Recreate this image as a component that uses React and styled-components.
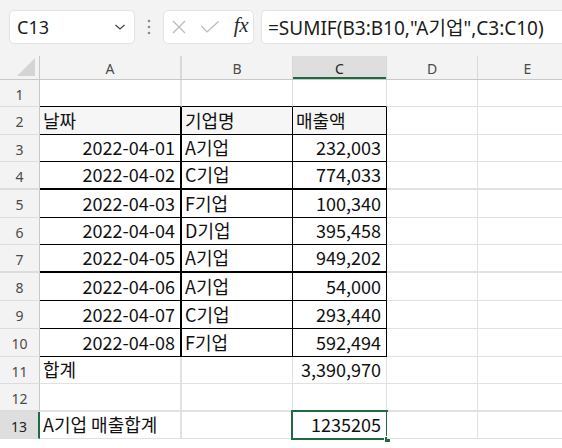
import React from "react";
import styled, { createGlobalStyle, css } from "styled-components";

const GlobalStyle = createGlobalStyle`
  html, body { margin: 0; padding: 0; background: #ffffff; }
  body { width: 562px; height: 448px; overflow: hidden; }
  * { box-sizing: border-box; }
`;

const GREEN = "#1f6b41";
const GRID = "#e1e1e1";
const INK = "#000000";

const Page = styled.div`
  width: 562px;
  height: 448px;
  overflow: hidden;
  background: #f3f3f3;
  display: flex;
  flex-direction: column;
`;

const Toolbar = styled.div`
  height: 56px;
  display: flex;
  align-items: flex-start;
  padding: 10px 0 0 9px;
`;

const Field = styled.div`
  height: 34px;
  background: #ffffff;
  border: 1px solid #e3e3e3;
  border-radius: 5px;
  display: flex;
  align-items: center;
`;

const NameBox = styled(Field)`
  width: 126px;
  padding: 0 8px 0 7px;
  justify-content: space-between;
  font-family: "Noto Sans", "Open Sans", sans-serif;
  font-size: 18px;
  color: #1b1b1b;
`;

const Grip = styled.div`
  width: 28px;
  height: 34px;
  display: flex;
  align-items: center;
  justify-content: center;
`;

const FxBox = styled(Field)`
  width: 91px;
  padding: 0 5px 0 7px;
  justify-content: space-between;
`;

const FxLabel = styled.span`
  font-family: "Liberation Serif", "DejaVu Serif", serif;
  font-style: italic;
  font-size: 21px;
  color: #2b2b2b;
  letter-spacing: -0.5px;
  margin-top: -3px;
`;

const FormulaBox = styled(Field)`
  flex: 1;
  margin-left: 7px;
  border-right: none;
  border-radius: 5px 0 0 5px;
  padding-left: 6px;
  font-family: "Noto Sans", "Noto Sans CJK KR", sans-serif;
  font-size: 19px;
  color: #1b1b1b;
  white-space: nowrap;
  overflow: hidden;
`;

const Sheet = styled.div`
  flex: 1;
  display: flex;
  flex-direction: column;
  background: #ffffff;
`;

const HeaderRow = styled.div`
  display: flex;
  height: 24px;
  background: #f3f3f3;
  border-bottom: 1px solid #c8c8c8;
  flex: none;
`;

const Corner = styled.div`
  width: 40px;
  flex: none;
  border-right: 1px solid #c8c8c8;
  display: flex;
  align-items: flex-end;
  justify-content: flex-end;
  padding: 0 4px 3px 0;
`;

const ColHead = styled.div`
  flex: none;
  width: ${(p) => p.$w}px;
  border-right: ${(p) => (p.$thick ? 2 : 1)}px solid #d8d8d8;
  display: flex;
  align-items: center;
  justify-content: center;
  font-family: "Noto Sans", "Open Sans", sans-serif;
  font-size: 14px;
  color: #4a4a4a;
  padding-top: 1px;
  ${(p) =>
    p.$active &&
    css`
      background: #dedede;
      color: #222;
      box-shadow: inset 0 -2px 0 ${GREEN};
    `}
`;

const Row = styled.div`
  display: flex;
  flex: none;
  height: ${(p) => p.$h}px;
`;

const RowHead = styled.div`
  width: 40px;
  flex: none;
  background: #f3f3f3;
  border-right: 1px solid #c8c8c8;
  border-bottom: ${(p) => (p.$thick ? 2 : 1)}px solid #dcdcdc;
  display: flex;
  align-items: center;
  justify-content: center;
  font-family: "Noto Sans", "Open Sans", sans-serif;
  font-size: 14px;
  color: #4a4a4a;
  padding-top: 2px;
  ${(p) =>
    p.$active &&
    css`
      background: #dedede;
      color: #222;
      border-right: 2px solid ${GREEN};
    `}
`;

const Cell = styled.div`
  position: relative;
  flex: none;
  width: ${(p) => p.$w}px;
  border-right: ${(p) => p.$rw}px solid ${(p) => p.$rc};
  border-bottom: ${(p) => p.$bw}px solid ${(p) => p.$bc};
  background: ${(p) => p.$bg || "#ffffff"};
  display: flex;
  align-items: flex-end;
  justify-content: ${(p) => (p.$right ? "flex-end" : "flex-start")};
  padding: 0 ${(p) => (p.$right ? 5 : 2)}px 5px ${(p) => (p.$right ? 2 : 3)}px;
  font-family: "Noto Sans CJK KR", "Noto Sans", sans-serif;
  font-size: 18px;
  line-height: 1;
  color: #111;
  white-space: nowrap;
`;

const Selection = styled.div`
  position: absolute;
  left: -2px;
  top: -2px;
  right: -2px;
  bottom: -2px;
  border: 2px solid ${GREEN};
  pointer-events: none;
`;

const Handle = styled.div`
  position: absolute;
  right: -5px;
  bottom: -5px;
  width: 7px;
  height: 7px;
  background: ${GREEN};
  border: 1px solid #ffffff;
`;

const colWidths = [142, 111, 94, 91, 100];
const colNames = ["A", "B", "C", "D", "E"];
const rowHeights = [27, 28, 27, 28, 28, 27, 28, 28, 28, 28, 27, 28, 27];
const thickRows = [4, 7, 12];

const data = {
  2: [["날짜"], ["기업명"], ["매출액"]],
  3: [["2022-04-01", 1], ["A기업"], ["232,003", 1]],
  4: [["2022-04-02", 1], ["C기업"], ["774,033", 1]],
  5: [["2022-04-03", 1], ["F기업"], ["100,340", 1]],
  6: [["2022-04-04", 1], ["D기업"], ["395,458", 1]],
  7: [["2022-04-05", 1], ["A기업"], ["949,202", 1]],
  8: [["2022-04-06", 1], ["A기업"], ["54,000", 1]],
  9: [["2022-04-07", 1], ["C기업"], ["293,440", 1]],
  10: [["2022-04-08", 1], ["F기업"], ["592,494", 1]],
  11: [["합계"], [""], ["3,390,970", 1]],
  13: [["A기업 매출합계"], [""], ["1235205", 1]],
};

function cellBorders(r, c) {
  const inTable = c <= 2;
  let bc = GRID;
  if (inTable && r >= 1 && r <= 10) bc = INK;
  let rc = GRID;
  if (inTable && r >= 2 && r <= 10) rc = INK;
  const bw = thickRows.includes(r) ? 2 : 1;
  const rw = c === 0 ? 2 : 1;
  return { bc, rc, bw, rw };
}

const ChevronIcon = () => (
  <svg width="12" height="8" viewBox="0 0 12 8">
    <path d="M1.5 2 L6 6 L10.5 2" fill="none" stroke="#444" strokeWidth="1.3" />
  </svg>
);

const GripIcon = () => (
  <svg width="4" height="16" viewBox="0 0 4 16">
    <circle cx="2" cy="2" r="1.3" fill="#8a8a8a" />
    <circle cx="2" cy="8" r="1.3" fill="#8a8a8a" />
    <circle cx="2" cy="14" r="1.3" fill="#8a8a8a" />
  </svg>
);

const CrossIcon = () => (
  <svg width="16" height="16" viewBox="0 0 16 16">
    <path d="M2 2 L14 14 M14 2 L2 14" stroke="#b9b9b9" strokeWidth="1.2" fill="none" />
  </svg>
);

const CheckIcon = () => (
  <svg width="20" height="14" viewBox="0 0 20 14">
    <path d="M1.5 6 L7 12 L18.5 1.5" stroke="#b9b9b9" strokeWidth="1.2" fill="none" />
  </svg>
);

const CornerTriangle = () => (
  <svg width="18" height="18" viewBox="0 0 18 18">
    <path d="M18 0 L18 18 L0 18 Z" fill="#d4d4d4" />
  </svg>
);

export default function App() {
  return (
    <>
      <GlobalStyle />
      <Page>
        <Toolbar>
          <NameBox>
            <span>C13</span>
            <ChevronIcon />
          </NameBox>
          <Grip>
            <GripIcon />
          </Grip>
          <FxBox>
            <CrossIcon />
            <CheckIcon />
            <FxLabel>fx</FxLabel>
          </FxBox>
          <FormulaBox>=SUMIF(B3:B10,"A기업",C3:C10)</FormulaBox>
        </Toolbar>
        <Sheet>
          <HeaderRow>
            <Corner>
              <CornerTriangle />
            </Corner>
            {colNames.map((n, i) => (
              <ColHead key={n} $w={colWidths[i]} $thick={i === 0} $active={n === "C"}>
                {n}
              </ColHead>
            ))}
          </HeaderRow>
          {rowHeights.map((h, idx) => {
            const r = idx + 1;
            const rowData = data[r] || [];
            return (
              <Row key={r} $h={h}>
                <RowHead $active={r === 13} $thick={thickRows.includes(r)}>
                  {r}
                </RowHead>
                {colWidths.map((w, c) => {
                  const b = cellBorders(r, c);
                  const d = rowData[c];
                  const selected = r === 13 && c === 2;
                  return (
                    <Cell
                      key={c}
                      $w={w}
                      $bc={b.bc}
                      $rc={b.rc}
                      $bw={b.bw}
                      $rw={b.rw}
                      $right={d && d[1]}
                      $bg={r === 2 && c <= 2 ? "#f6f6f6" : undefined}
                    >
                      {d ? d[0] : ""}
                      {selected && (
                        <Selection>
                          <Handle />
                        </Selection>
                      )}
                    </Cell>
                  );
                })}
              </Row>
            );
          })}
        </Sheet>
      </Page>
    </>
  );
}
